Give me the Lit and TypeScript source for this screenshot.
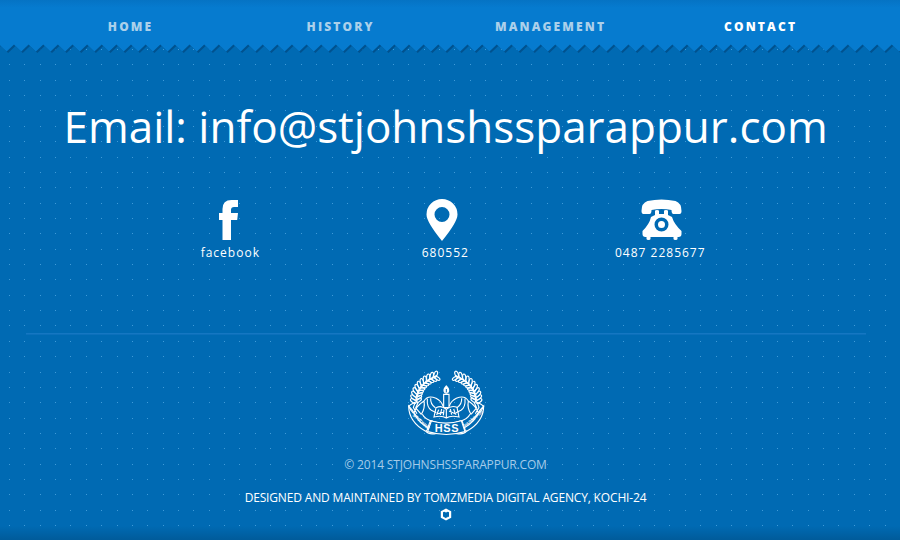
import { LitElement, html, svg, css } from "lit";
import { customElement } from "lit/decorators.js";

const dots = () => {
  let d = "";
  for (let r = 0; r < 32; r++)
    for (let c = 0; c < 59; c++)
      d += `M${Math.round(9 + c * 15.36)} ${Math.round(49 + r * 15.36)}h1v1h-1z`;
  return d;
};

const zigzag = () => {
  let d = "M-8 0V52";
  for (let i = 0; i < 64; i++) {
    const x = -15.3 + i * 14.63;
    d += `L${x.toFixed(2)} 44.5L${(x + 7.3).toFixed(2)} 51.6`;
  }
  return d + "V0Z";
};

// Two rows of grains following one curved stalk.
const grains = () =>
  Array.from({ length: 11 }, (_, i) => {
    const deg = 178 + i * 7.4;
    const a = (deg * Math.PI) / 180;
    const ox = 134 + 97 * Math.cos(a);
    const oy = 108 + 81 * Math.sin(a);
    const nx = 134 + 80 * Math.cos(a);
    const ny = 106 + 66 * Math.sin(a);
    return svg`<ellipse cx=${ox} cy=${oy} rx="10" ry="4.8" transform="rotate(${deg + 38} ${ox} ${oy})"/>
      <ellipse cx=${nx} cy=${ny} rx="8.500" ry="4.200" transform="rotate(${deg + 142} ${nx} ${ny})"/>`;
  });

const half = () => svg`
  ${grains()}
  <path d="M47 114Q46 64 108 34M42 115Q28 122 23 127Q28 139 37 147M43 114L37 130L48 149M52 114L44 132L61 151M61 151Q73 132 69 111Q48 124 37 148M69 111Q80 92 105 103Q121 111 126 126M79 104Q77 130 91 139L106 146M89 103Q88 122 103 131M64 151Q72 167 96 172M39 145Q47 162 62 169"/>
  <path d="M23 126Q23 173 74 202L83 193Q48 172 35 140ZM75 202Q84 213 106 208L105 174L88 171L79 195"/>`;

@customElement("app-root")
export class AppRoot extends LitElement {
  static styles = css`
    :host {
      display: block;
      height: 540px;
    }
    .page {
      position: relative;
      height: 540px;
      overflow: hidden;
      background: linear-gradient(transparent 526px, #005b9a 540px), #006ab3;
      font-family: "Open Sans", sans-serif;
      color: #fff;
    }
    .backdrop {
      position: absolute;
      inset: 0;
    }
    .content {
      position: relative;
      display: flex;
      flex-direction: column;
    }
    nav {
      display: grid;
      grid-template-columns: repeat(4, 210px);
      padding: 0 25.6px;
      height: 54px;
      line-height: 54px;
      text-align: center;
      font-size: 12px;
      font-weight: 800;
      letter-spacing: 2.15px;
      color: #abd0ea;
    }
    .active {
      color: #fff;
    }
    h1 {
      margin: 42px 0 0 63.5px;
      font-weight: 400;
      font-size: 44px;
      line-height: 60px;
      white-space: nowrap;
    }
    .contacts {
      display: grid;
      grid-template-columns: 215px 215px 215px;
      padding: 43px 0 0 122.8px;
    }
    .contact {
      display: flex;
      flex-direction: column;
      align-items: center;
      font-size: 12px;
      line-height: 16px;
      letter-spacing: 1px;
    }
    .contact svg {
      margin-bottom: 3px;
    }
    .contact .phone {
      margin-left: 4px;
    }
    .rule {
      height: 1px;
      margin: 72px 34px 0 26px;
      background: #1577c2;
      box-shadow: 0 1px #0c70bb;
    }
    footer {
      display: flex;
      flex-direction: column;
      align-items: center;
      padding: 30px 9px 0 0;
      font-size: 12px;
      line-height: 16px;
      letter-spacing: -0.16px;
      white-space: nowrap;
    }
    .copy {
      margin-top: 17px;
      color: #a5cbe8;
    }
    .credit {
      margin: 17px 0 2px;
    }
    .hss {
      font: 800 31px "Liberation Sans", sans-serif;
      letter-spacing: 2px;
    }
    .motto {
      font: 700 13px "Liberation Sans", sans-serif;
    }
  `;

  render() {
    return html`
      <div class="page">
        <svg class="backdrop" width="900" height="540">
          <defs>
            <linearGradient id="bar" x1="0" y1="0" x2="0" y2="1">
              <stop offset="0" stop-color="#0573c4" />
              <stop offset=".15" stop-color="#067bcf" />
              <stop offset="1" stop-color="#067bcf" />
            </linearGradient>
          </defs>
          <path d=${dots()} fill="#409bd8" />
          <path d=${zigzag()} fill="#00528f" transform="translate(1.5 1.4)" />
          <path d=${zigzag()} fill="url(#bar)" />
        </svg>
        <div class="content">
          <nav>
            <span>HOME</span><span>HISTORY</span><span>MANAGEMENT</span
            ><span class="active">CONTACT</span>
          </nav>
          <h1>Email: info@stjohnshssparappur.com</h1>
          <div class="contacts">
            <div class="contact">
              <svg width="42" height="43" viewBox="0 0 42 43" fill="#fff">
                <path d="M13.500 41V21H10v-7h3.500v-4Q13.500 1 22.500 1H29v7h-4q-3 0-3 3v3h7l-.8 7H22v20Z" />
              </svg>
              <span>facebook</span>
            </div>
            <div class="contact">
              <svg width="42" height="43" viewBox="0.5 0 42 43" fill="#fff" fill-rule="evenodd">
                <path d="M18.500 42Q3 23 3 15.500a15.500 15.500 0 0 1 31 0Q34 23 18.500 42ZM18.500 8a7.500 7.500 0 1 0 0 15a7.500 7.500 0 0 0 0-15Z" />
              </svg>
              <span>680552</span>
            </div>
            <div class="contact">
              <svg class="phone" width="42" height="43" viewBox="0.5 0 42 43" fill="#fff" fill-rule="evenodd">
                <path d="M3 15Q1 15 1 12Q1 4 7 2Q21-1 35 2Q41 4 41 12Q41 15 39 15H33Q31 15 31 11Q21 9 11 11Q11 15 9 15Z" />
                <path d="M14.500 16v-4q0-1 2-1t2 1v3h5v-3q0-1 2-1t2 1v4l4 2Q33.500 25 41 32v3q0 3-3 3h-1v2q0 1-2 1t-2-1v-2H10v2q0 1-2 1t-2-1v-2H5q-3 0-3-3v-3Q9 25 10.500 18ZM21 18.500a7 7 0 1 0 0 14a7 7 0 0 0 0-14Zm0 3.500a3.500 3.500 0 1 1 0 7a3.500 3.500 0 0 1 0-7Z" />
              </svg>
              <span>0487 2285677</span>
            </div>
          </div>
          <div class="rule"></div>
          <footer>
            <svg width="90" height="76" viewBox="0 0 270 228" fill="none" stroke="#fff" stroke-width="3.4">
              ${half()}
              <g transform="translate(271 0) scale(-1 1)">${half()}</g>
              <path d="M128 91h16v40h-16ZM105 131q18-8 31 5q15-13 32-6l6 29q-25-6-38 3q-14-9-37-3ZM136 136v26M113 137l-6 16M122 135l-4 18M129 137l-2 17M148 135l4 17M158 135l6 17M107 150l20-5M144 141l22 10" />
              <path d="M136 66q-11 12-5 19q5 5 10 0q6-7-5-19Z" fill="#fff" />
              <path d="M136 75v10" stroke="#006ab3" stroke-width="3" />
              <path d="M91 171Q136 184 181 170L192 203Q136 220 80 203Z" fill="#006ab3" />
              <g fill="#fff" stroke="none">
                <text class="hss" x="101" y="204" textLength="74" lengthAdjust="spacingAndGlyphs">HSS</text>
                <text class="motto" transform="translate(34 155) rotate(42)">ST JOHNS</text>
                <text class="motto" transform="translate(194 190) rotate(-41)">PARAPPUR</text>
              </g>
            </svg>
            <div class="copy">© 2014 STJOHNSHSSPARAPPUR.COM</div>
            <div class="credit">DESIGNED AND MAINTAINED BY TOMZMEDIA DIGITAL AGENCY, KOCHI-24</div>
            <svg width="12" height="13" viewBox="0 0 12 13">
              <path d="M6 .5l5.200 2.800v6.500L6 12.600L.8 9.800V3.300Z" fill="#fff" />
              <path d="M3 4.200l1.200-.5L6 4.500l1.800-.8l1.200.5v4.300L7.500 9.400V8.500L6 10.200L3 8.500Z" fill="#006ab3" />
            </svg>
          </footer>
        </div>
      </div>
    `;
  }
}
